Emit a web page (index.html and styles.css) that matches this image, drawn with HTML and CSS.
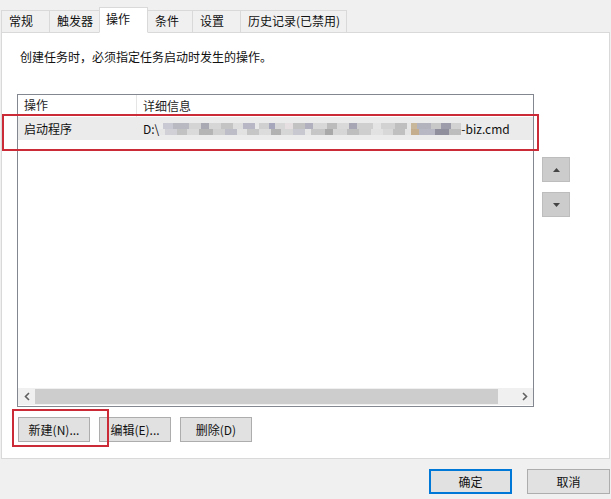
FILE: index.html
```html
<!DOCTYPE html>
<html lang="zh-CN">
<head>
  <meta charset="UTF-8" />
  <title>操作</title>
  <link rel="stylesheet" href="styles.css">
</head>
<body>
  <div class="dialog">
    <!-- Tab strip -->
    <div class="tabs">
      <div class="tab">常规</div>
      <div class="tab">触发器</div>
      <div class="tab active">操作</div>
      <div class="tab narrow">条件</div>
      <div class="tab">设置</div>
      <div class="tab">历史记录(已禁用)</div>
    </div>

    <!-- Actions page -->
    <div class="panel">
      <p class="intro">创建任务时，必须指定任务启动时发生的操作。</p>

      <div class="list-area">
        <div class="list">
          <div class="list-head">
            <div class="col col-action">操作</div>
            <div class="col col-detail">详细信息</div>
          </div>
          <div class="list-body">
            <div class="row selected">
              <div class="col col-action">启动程序</div>
              <div class="col col-detail">D:\<span class="masked"></span>-biz.cmd</div>
            </div>
          </div>
          <div class="hscroll">
            <span class="arrow">
              <svg width="6" height="9" viewBox="0 0 6 9"><polyline points="5,1 1.5,4.5 5,8" fill="none" stroke="#606060" stroke-width="1.6"/></svg>
            </span>
            <span class="thumb"></span>
            <span class="track"></span>
            <span class="arrow">
              <svg width="6" height="9" viewBox="0 0 6 9"><polyline points="1,1 4.5,4.5 1,8" fill="none" stroke="#606060" stroke-width="1.6"/></svg>
            </span>
          </div>
        </div>

        <!-- Move up / move down -->
        <div class="order-buttons">
          <button class="order-btn">
            <svg width="7" height="4" viewBox="0 0 7 4"><polygon points="0,4 3.5,0 7,4" fill="#444"/></svg>
          </button>
          <button class="order-btn">
            <svg width="7" height="4" viewBox="0 0 7 4"><polygon points="0,0 7,0 3.5,4" fill="#444"/></svg>
          </button>
        </div>
      </div>

      <div class="actions">
        <button class="btn">新建(N)...</button>
        <button class="btn">编辑(E)...</button>
        <button class="btn">删除(D)</button>
      </div>

      <!-- red callouts -->
      <div class="callout callout-row"></div>
      <div class="callout callout-new"></div>
    </div>

    <div class="footer">
      <button class="btn wide primary">确定</button>
      <button class="btn wide">取消</button>
    </div>
  </div>
</body>
</html>
```

FILE: styles.css
```css
* {
  margin: 0;
  padding: 0;
  box-sizing: border-box;
}

body {
  background-color: #f0f0f0;
  font-family: "Noto Sans CJK SC", "Microsoft YaHei", sans-serif;
  font-size: 12px;
  color: #111;
}

.dialog {
  width: 611px;
  height: 499px;
  display: flex;
  flex-direction: column;
}

/* TABS */
.tabs {
  display: flex;
  align-items: flex-end;
  height: 33px;
  padding-left: 1px;
}

.tab {
  height: 23px;
  min-width: 49px;
  padding: 0 6px 0 7px;
  margin-right: -1px;
  border: 1px solid #d9d9d9;
  background-color: #f0f0f0;
  line-height: 20px;
  white-space: nowrap;
}

.tab.narrow {
  min-width: 46px;
}

.tab.active {
  position: relative;
  height: 26px;
  background-color: #fff;
  border-bottom-color: #fff;
  z-index: 1;
  line-height: 22px;
  padding-left: 6px;
}

/* PANEL */
.panel {
  position: relative;
  height: 427px;
  margin: -1px 1px 0 1px;
  background-color: #fff;
  border: 1px solid #d9d9d9;
  padding-left: 15px;
}

.intro {
  margin-top: 16px;
  padding-left: 3px;
  line-height: 16px;
}

.list-area {
  display: flex;
  gap: 8px;
  margin-top: 29px;
}

/* LIST VIEW */
.list {
  width: 517px;
  height: 313px;
  border: 1px solid #828790;
  display: flex;
  flex-direction: column;
}

.list-head {
  display: flex;
  height: 22px;
  line-height: 20px;
  color: #1e1e1e;
}

.list-head .col-action {
  border-right: 1px solid #e5e5e5;
}

.list-body {
  flex: 1;
}

.row {
  display: flex;
  height: 23px;
  line-height: 23px;
}

.row.selected {
  background-color: #ebebeb;
}

.col-action {
  width: 119px;
  padding-left: 6px;
}

.col-detail {
  flex: 1;
  padding-left: 6px;
  display: flex;
  align-items: center;
  white-space: nowrap;
}

/* pixelated path */
.masked {
  display: inline-block;
  width: 302px;
  height: 12px;
  background-image:
    linear-gradient(90deg,
      #ececec 0 4px, #c9c9d3 4px 14px, #b9b9c2 14px 30px, #d4d4d4 30px 42px, #a9a9b3 42px 50px,
      #d6d6d6 50px 62px, #c4c4c4 62px 74px, #dedede 74px 84px, #b7b7c6 84px 96px, #e8e8e8 96px 100px,
      #d0d0d0 100px 110px, #a6a6bc 110px 116px, #d7d7d7 116px 126px, #e6dfe2 126px 134px,
      #c2c2c2 134px 146px, #b0b0bf 146px 154px, #d8d8d8 154px 168px, #bcbcbc 168px 178px,
      #d9d9d9 178px 190px, #a6a6b4 190px 198px, #cfcfcf 198px 214px, #e4e4e4 214px 222px,
      #d2d2d2 222px 236px, #bfbfbf 236px 248px, #e6e6e6 248px 252px, #c9b79b 252px 258px,
      #b3b3be 258px 272px, #c8c8c8 272px 282px, #9c9cab 282px 292px, #d2d2d2 292px 302px),
    linear-gradient(90deg,
      #e6e6e6 0 6px, #d0d0d6 6px 18px, #c2c2c2 18px 28px, #dadada 28px 40px, #b5b5b5 40px 54px,
      #d0d0d0 54px 66px, #bdbdc8 66px 78px, #e2e2e2 78px 88px, #c6c6c6 88px 100px,
      #dcdcdc 100px 112px, #b2b2b2 112px 122px, #d6d6d6 122px 134px, #c8c8d0 134px 146px,
      #e6e6e6 146px 152px, #c6c6c6 152px 166px, #a9a9a9 166px 174px, #d6d6d6 174px 188px,
      #bebebe 188px 200px, #cecece 200px 212px, #e2e2e2 212px 224px, #d8d8d8 224px 234px,
      #c0c0c0 234px 246px, #e4e4e4 246px 252px, #c4ae8e 252px 260px, #b8b8c4 260px 276px,
      #8f8f9e 276px 290px, #bdbdbd 290px 302px);
  background-size: 100% 50%, 100% 50%;
  background-position: 0 0, 0 100%;
  background-repeat: no-repeat;
  filter: blur(0.6px);
}

.hscroll {
  display: flex;
  height: 17px;
  margin-bottom: 1px;
  background-color: #f0f0f0;
}

.hscroll .arrow {
  width: 17px;
  display: flex;
  align-items: center;
  justify-content: center;
}

.hscroll .thumb {
  width: 463px;
  margin: 1px 0;
  background-color: #cdcdcd;
}

.hscroll .track {
  flex: 1;
}

/* MOVE UP / DOWN */
.order-buttons {
  display: flex;
  flex-direction: column;
  gap: 10px;
  padding-top: 63px;
}

.order-btn {
  width: 28px;
  height: 25px;
  background-color: #cccccc;
  border: 1px solid #bdbdbd;
  display: flex;
  align-items: center;
  justify-content: center;
}

/* BUTTONS */
.actions {
  display: flex;
  gap: 9px;
  margin-top: 10px;
  padding-left: 1px;
}

.btn {
  height: 25px;
  min-width: 72px;
  padding: 0 8px;
  background-color: #e1e1e1;
  border: 1px solid #adadad;
  font-family: inherit;
  font-size: 12px;
  color: #111;
}

.btn.wide {
  width: 83px;
}

.btn.primary {
  border: 2px solid #0078d7;
}

.footer {
  display: flex;
  justify-content: flex-end;
  gap: 15px;
  padding: 10px 1px 0 0;
}

/* red callouts drawn over the page */
.callout {
  position: absolute;
  border: 2px solid #cb2a37;
}

.callout-row {
  left: 0;
  top: 81px;
  width: 537px;
  height: 37px;
}

.callout-new {
  left: 10px;
  top: 376px;
  width: 97px;
  height: 38px;
}
```
